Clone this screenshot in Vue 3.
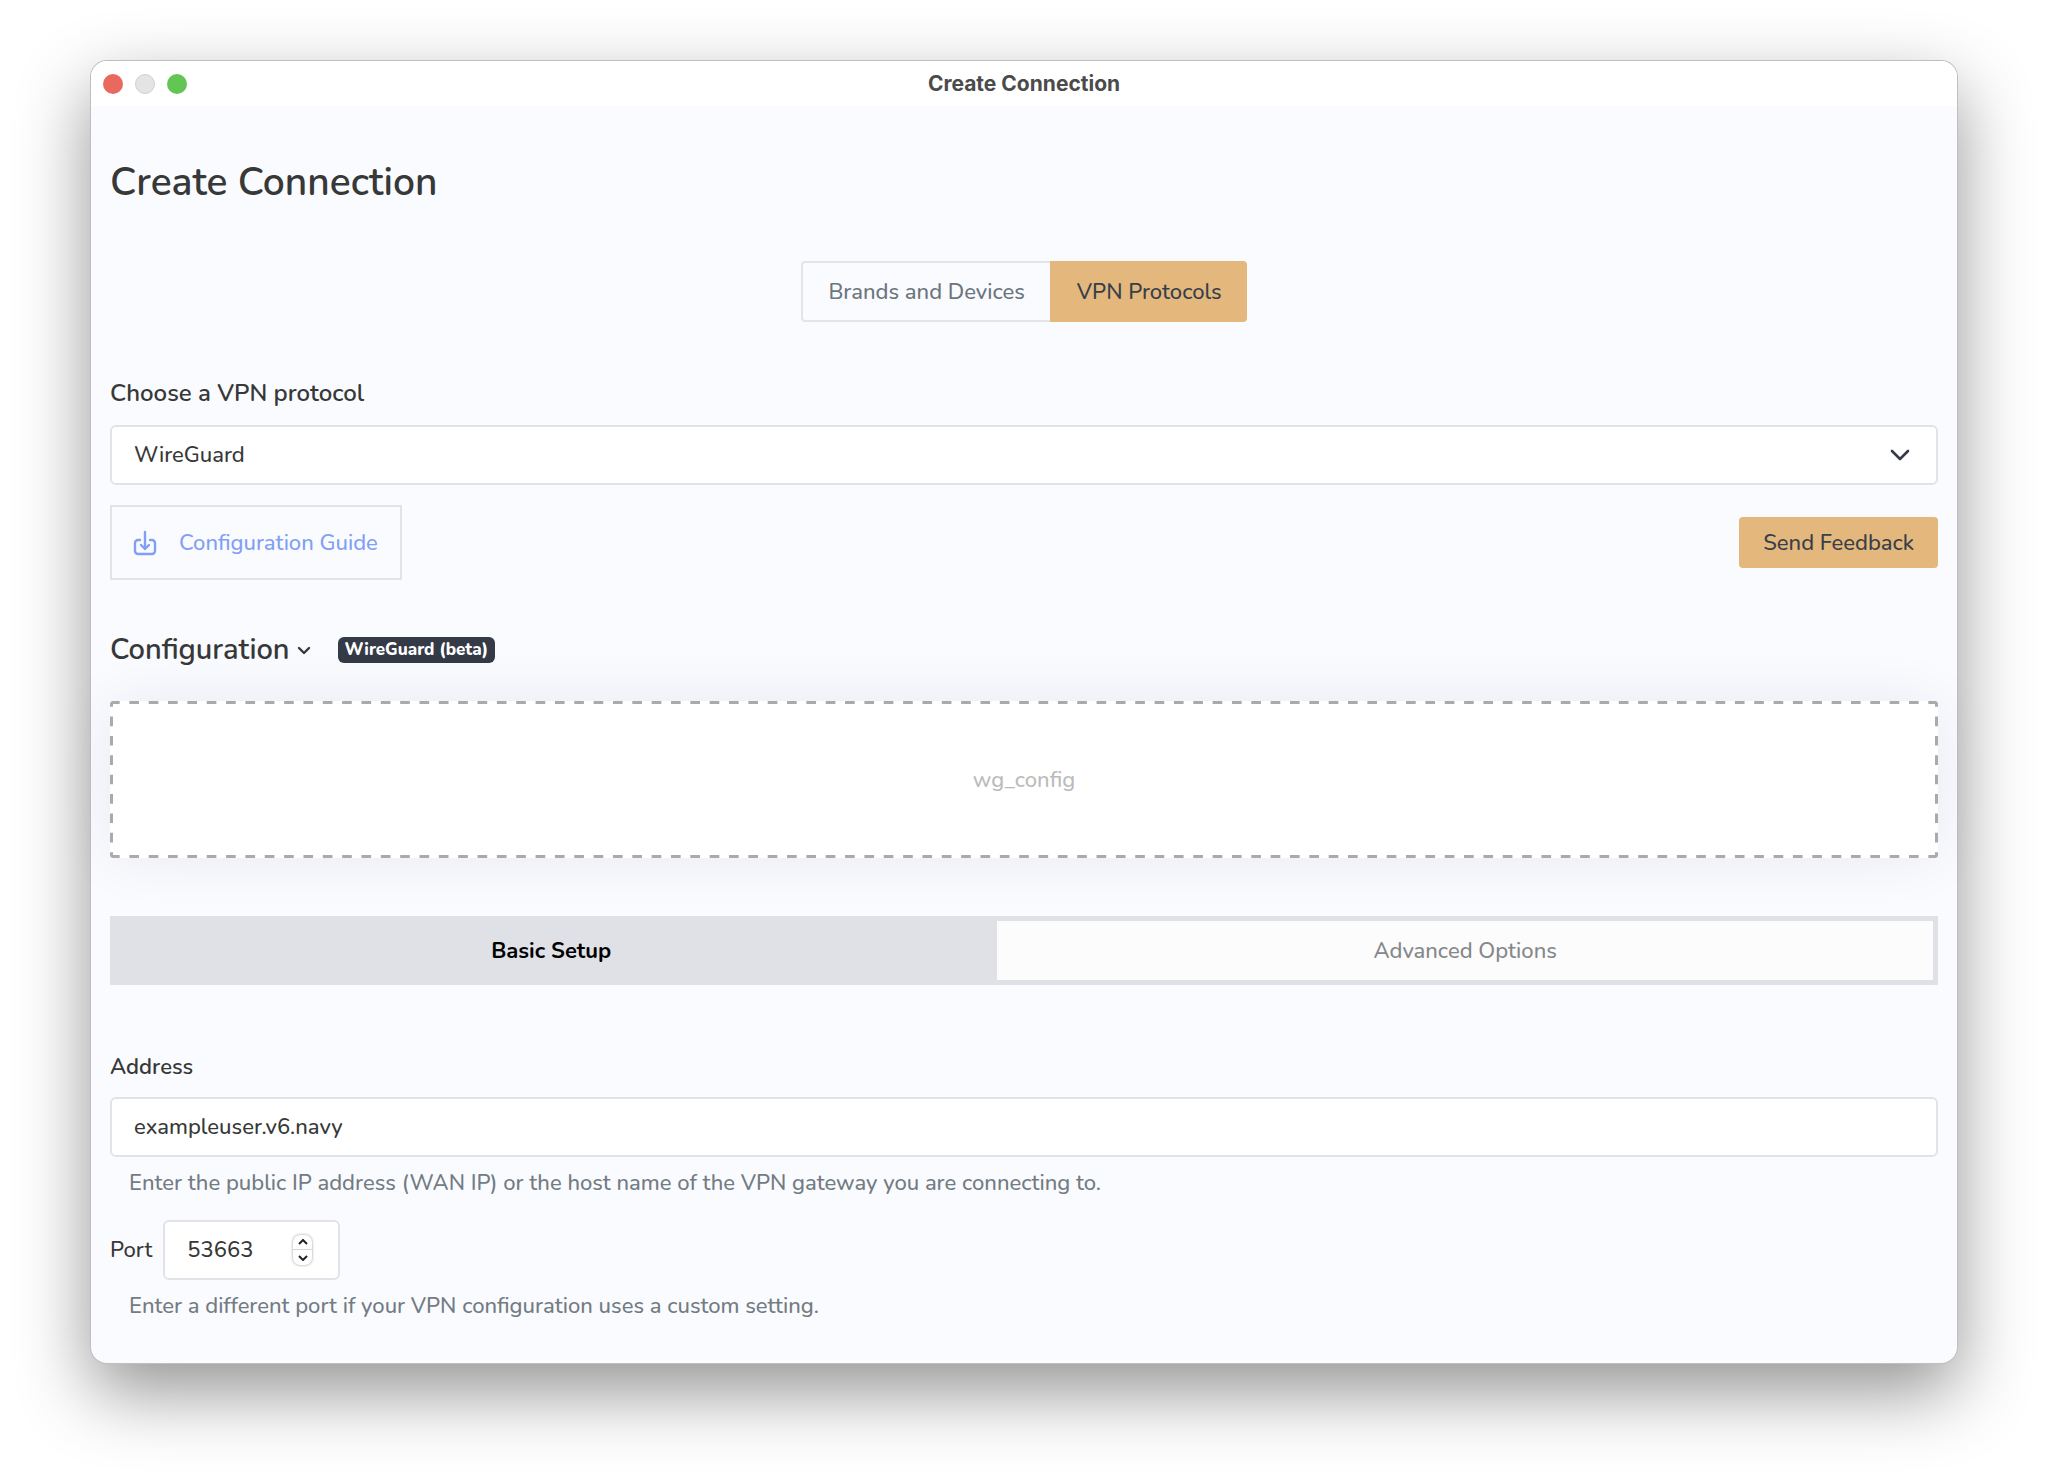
<script setup>
import { ref } from 'vue';

const source = ref('protocols');
const protocol = ref('WireGuard');
const setupTab = ref('basic');
const address = ref('exampleuser.v6.navy');
const port = ref(53663);

const sources = [
  { id: 'brands', label: 'Brands and Devices' },
  { id: 'protocols', label: 'VPN Protocols' },
];

const setupTabs = [
  { id: 'basic', label: 'Basic Setup' },
  { id: 'advanced', label: 'Advanced Options' },
];
</script>

<template>
  <div class="desktop">
    <main class="window">
      <header class="titlebar">
        <div class="lights">
          <button type="button" class="light close" aria-label="Close"></button>
          <button type="button" class="light minimize" aria-label="Minimize" disabled></button>
          <button type="button" class="light zoom" aria-label="Zoom"></button>
        </div>
        <span class="titlebar-text">Create Connection</span>
      </header>

      <form class="content" @submit.prevent>
        <h1 class="page-title">Create Connection</h1>

        <div class="source-switch">
          <button
            v-for="item in sources"
            :key="item.id"
            type="button"
            class="source-button"
            :class="{ active: source === item.id }"
            @click="source = item.id"
          >{{ item.label }}</button>
        </div>

        <label class="protocol-label" for="protocol">Choose a VPN protocol</label>
        <div class="select-wrap">
          <select id="protocol" v-model="protocol" class="field">
            <option>WireGuard</option>
          </select>
          <svg class="select-arrow" viewBox="0 0 20 12" fill="none">
            <path d="M2 2l8 8 8-8" stroke="#343a46" stroke-width="2.6" stroke-linecap="round" stroke-linejoin="round" />
          </svg>
        </div>

        <div class="actions">
          <a href="#" class="guide-link">
            <svg class="guide-icon" viewBox="0 0 24 26" fill="none" stroke="currentColor" stroke-width="2.4" stroke-linecap="round" stroke-linejoin="round">
              <path d="M7 10H5a3 3 0 0 0-3 3v8a3 3 0 0 0 3 3h14a3 3 0 0 0 3-3v-8a3 3 0 0 0-3-3h-2" />
              <path d="M12 2v17M8 15l4 4 4-4" />
            </svg>
            Configuration Guide
          </a>
          <button type="button" class="feedback-button">Send Feedback</button>
        </div>

        <div class="config-head">
          <h2 class="config-title">
            Configuration
            <svg class="config-arrow" viewBox="0 0 14 9" fill="none">
              <path d="M2 2l5 5 5-5" stroke="#373838" stroke-width="2.4" stroke-linecap="round" stroke-linejoin="round" />
            </svg>
          </h2>
          <span class="badge">WireGuard (beta)</span>
        </div>

        <div class="dropzone">
          <!-- dashed frame: dashes stay evenly spread at any width -->
          <svg class="dropzone-frame" aria-hidden="true">
            <line x1="0" y1="0" x2="100%" y2="0" pathLength="189" stroke-dasharray="1 1" />
            <line x1="0" y1="100%" x2="100%" y2="100%" pathLength="189" stroke-dasharray="1 1" />
            <line x1="0" y1="0" x2="0" y2="100%" pathLength="162" stroke-dasharray="10 10" stroke-dashoffset="4" />
            <line x1="100%" y1="0" x2="100%" y2="100%" pathLength="162" stroke-dasharray="10 10" stroke-dashoffset="4" />
          </svg>
          wg_config
        </div>

        <div class="setup-tabs">
          <button
            v-for="tab in setupTabs"
            :key="tab.id"
            type="button"
            class="setup-tab"
            :class="{ active: setupTab === tab.id }"
            @click="setupTab = tab.id"
          >{{ tab.label }}</button>
        </div>

        <label class="address-label" for="address">Address</label>
        <input id="address" v-model="address" type="text" class="field" />
        <p class="hint">Enter the public IP address (WAN IP) or the host name of the VPN gateway you are connecting to.</p>

        <div class="port-row">
          <label for="port">Port</label>
          <div class="port-box">
            <input id="port" v-model.number="port" type="number" class="port-input" />
            <div class="stepper">
              <button type="button" class="step" aria-label="Increase port" @click="port++">
                <svg viewBox="0 0 10 6" fill="none"><path d="M1 5l4-4 4 4" stroke="#222" stroke-width="2" /></svg>
              </button>
              <button type="button" class="step" aria-label="Decrease port" @click="port--">
                <svg viewBox="0 0 10 6" fill="none"><path d="M1 1l4 4 4-4" stroke="#222" stroke-width="2" /></svg>
              </button>
            </div>
          </div>
        </div>
        <p class="hint">Enter a different port if your VPN configuration uses a custom setting.</p>
      </form>
    </main>
  </div>
</template>

<style>
body {
  background: #fff;
}
</style>

<style scoped>
.desktop {
  padding: 61px 91px 119px;
  overflow: hidden;
  font-family: Nunito, Lato, sans-serif;
  font-size: 22px;
  font-weight: 500;
  line-height: 30px;
  color: #373838;
}

.desktop *,
.desktop {
  box-sizing: border-box;
}

button,
input,
select {
  margin: 0;
  font: inherit;
  color: inherit;
}

button {
  padding: 0;
  border: none;
  background: none;
  cursor: pointer;
}

.window {
  border-radius: 16px;
  background: #fafbff;
  box-shadow: 0 0 0 1px #bfbfbf, 0 28px 72px rgba(0, 0, 0, 0.43);
}

/* Title bar */
.titlebar {
  display: grid;
  grid-template-columns: 1fr auto 1fr;
  align-items: center;
  height: 45px;
  padding: 0 12px;
  border-radius: 16px 16px 0 0;
  background: #fff;
}

.lights {
  display: flex;
  gap: 12px;
}

.light {
  width: 20px;
  height: 20px;
  border-radius: 50%;
}

.close {
  background: #ea695f;
}

.minimize {
  background: #e4e4e4;
  border: 1px solid #d0d0d0;
}

.zoom {
  background: #63c554;
}

.titlebar-text {
  font-family: Inter, sans-serif;
  font-size: 21px;
  font-weight: 700;
  color: #4b4b4b;
}

/* Form */
.content {
  padding: 53px 19px 42px;
}

.page-title {
  margin: 0 0 54px;
  font-size: 39px;
  font-weight: 600;
  line-height: 48px;
}

.source-switch {
  display: flex;
  justify-content: center;
  margin-bottom: 55px;
}

.source-button {
  height: 61px;
  padding: 0 25px;
  border: 2px solid #e2e4e8;
  border-right: none;
  border-radius: 4px 0 0 4px;
  color: #6c757d;
}

.source-button:last-child {
  border-radius: 0 4px 4px 0;
}

.source-button.active {
  border-color: #e4b77d;
  background: #e4b77d;
  color: #373f4a;
}

.protocol-label,
.address-label {
  display: block;
  font-weight: 600;
}

.protocol-label {
  margin-bottom: 16px;
  font-size: 24px;
  line-height: 32px;
}

.address-label {
  margin-bottom: 15px;
}

.field {
  display: block;
  width: 100%;
  height: 60px;
  padding: 0 22px;
  border: 2px solid #e1e3e8;
  border-radius: 6px;
  background: #fff;
  appearance: none;
}

.select-wrap {
  position: relative;
}

.select-arrow {
  position: absolute;
  top: 24px;
  right: 28px;
  width: 20px;
  height: 12px;
  pointer-events: none;
}

.actions {
  display: flex;
  justify-content: space-between;
  align-items: center;
  margin: 20px 0 52px;
}

.guide-link {
  display: flex;
  align-items: center;
  gap: 22px;
  height: 75px;
  padding: 0 22px 0 21px;
  border: 2px solid #e1e3e8;
  color: #809ff5;
  text-decoration: none;
}

.guide-icon {
  width: 24px;
  height: 26px;
}

.feedback-button {
  height: 51px;
  padding: 0 24px;
  border-radius: 4px;
  background: #e4b77d;
  color: #373f4a;
}

.config-head {
  display: flex;
  align-items: center;
  gap: 27px;
  margin-bottom: 33px;
}

.config-title {
  display: flex;
  align-items: center;
  gap: 7px;
  margin: 0;
  font-size: 29px;
  font-weight: 600;
  line-height: 36px;
}

.config-arrow {
  width: 14px;
  height: 9px;
}

.badge {
  padding: 0 7px;
  border-radius: 6px;
  background: #343a46;
  color: #fff;
  font-size: 17px;
  font-weight: 800;
  line-height: 26px;
}

.dropzone {
  position: relative;
  display: flex;
  justify-content: center;
  align-items: center;
  height: 157px;
  margin-bottom: 58px;
  border-radius: 4px;
  background: #fff;
  box-shadow: 0 0 60px rgba(30, 35, 50, 0.07);
  color: #bbb;
}

.dropzone-frame {
  position: absolute;
  inset: 0;
  width: 100%;
  height: 100%;
  border-radius: 4px;
  stroke: #aaa;
  stroke-width: 6;
}

.setup-tabs {
  display: flex;
  margin-bottom: 67px;
}

.setup-tab {
  flex: 1 1 auto;
  height: 69px;
  border: 5px solid #e0e1e6;
  background: #fcfcfc;
  color: #85878a;
}

.setup-tab.active {
  background: #e0e1e6;
  color: #000;
  font-weight: 700;
}

.hint {
  margin: 11px 0 0;
  padding-left: 19px;
  color: #737b83;
}

.port-row {
  display: flex;
  align-items: center;
  gap: 11px;
  margin-top: 22px;
}

.port-box {
  display: flex;
  align-items: center;
  justify-content: space-between;
  width: 177px;
  height: 60px;
  padding: 0 26px 0 22px;
  border: 2px solid #e1e3e8;
  border-radius: 6px;
  background: #fff;
}

.port-input {
  width: 80px;
  padding: 0;
  border: none;
  outline: none;
  background: none;
  appearance: textfield;
}

.port-input::-webkit-inner-spin-button {
  appearance: none;
}

.stepper {
  display: flex;
  flex-direction: column;
  width: 19px;
  border-radius: 7px;
  box-shadow: 0 0 3px rgba(0, 0, 0, 0.4);
}

.step {
  display: flex;
  justify-content: center;
  align-items: center;
  height: 15px;
}

.step:first-child {
  border-bottom: 1px solid #d5d5d5;
}

.step svg {
  width: 10px;
  height: 6px;
}
</style>
